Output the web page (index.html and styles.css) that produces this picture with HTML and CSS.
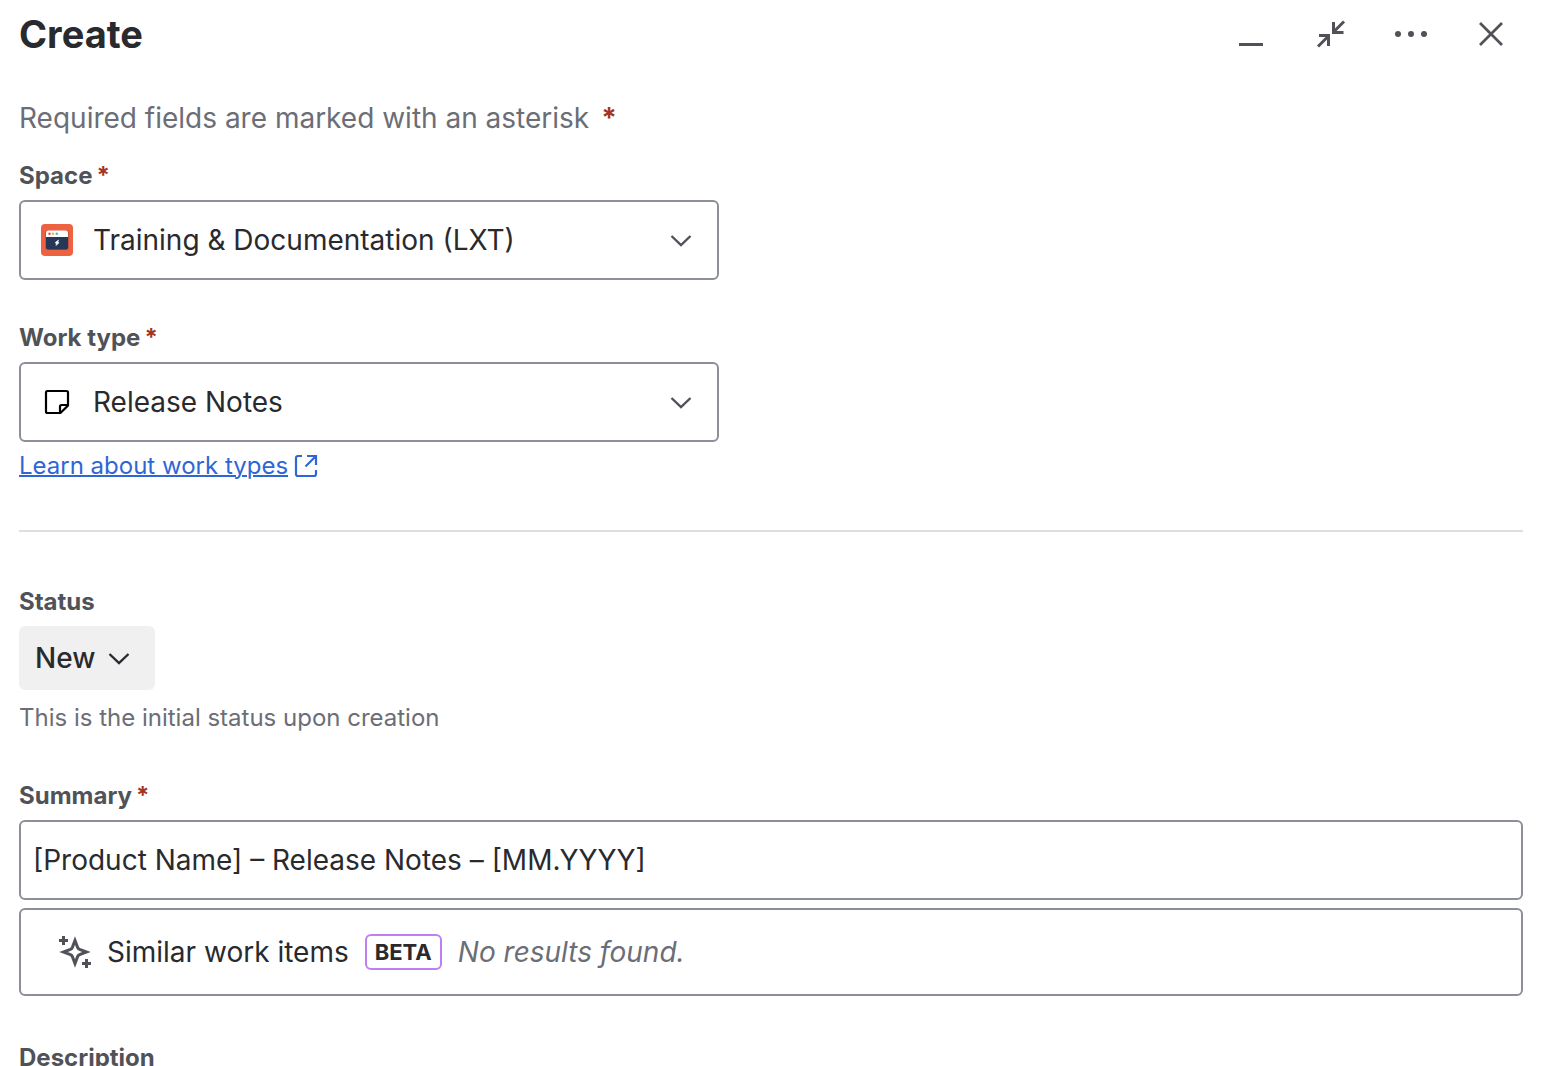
FILE: index.html
```html
<!DOCTYPE html>
<html lang="en">

<head>
    <meta charset="UTF-8">
    <meta name="viewport" content="width=device-width, initial-scale=1.0">
    <title>Create</title>
    <link rel="stylesheet" href="styles.css">
</head>

<body>
    <main class="dialog">
        <header class="header">
            <h1 class="title">Create</h1>
            <div class="actions">
                <button class="icon-button" type="button" aria-label="Minimize">
                    <svg width="32" height="32" viewBox="0 0 32 32"><path d="M4 26.500h24" stroke-width="3"/></svg>
                </button>
                <button class="icon-button" type="button" aria-label="Exit full screen">
                    <svg width="32" height="32" viewBox="0 0 32 32"><path d="M29 3.500L18.500 14M18.500 4V14.500H28.500M3 28.500L13.500 18M13.500 28V17.500H4" stroke-width="3"/></svg>
                </button>
                <button class="icon-button" type="button" aria-label="More actions">
                    <svg class="filled" width="36" height="32" viewBox="0 0 36 32"><circle cx="5" cy="16" r="3"/><circle cx="18" cy="16" r="3"/><circle cx="31" cy="16" r="3"/></svg>
                </button>
                <button class="icon-button" type="button" aria-label="Close">
                    <svg width="32" height="32" viewBox="0 0 32 32"><path d="M5 5L27 27M27 5L5 27" stroke-width="2.700"/></svg>
                </button>
            </div>
        </header>

        <form class="form">
            <p class="hint">Required fields are marked with an asterisk <span class="star">*</span></p>

            <div class="field field--first">
                <label class="label" for="space">Space<span class="star">*</span></label>
                <div class="select">
                    <select id="space">
                        <option>Training &amp; Documentation (LXT)</option>
                    </select>
                    <svg class="select__icon" width="32" height="32" viewBox="0 0 32 32">
                        <rect width="32" height="32" rx="4" fill="#ed6240"/>
                        <rect x="4" y="6.500" width="24" height="19.500" rx="3" fill="#c9503c"/>
                        <path d="M5 12.500h22v10.500a2.500 2.500 0 0 1-2.500 2.500H7.500a2.500 2.500 0 0 1-2.500-2.500z" fill="#253858"/>
                        <path d="M5 13V9a2.500 2.500 0 0 1 2.500-2.500h17a2.500 2.500 0 0 1 2.500 2.500v4z" fill="#fff"/>
                        <circle cx="8.500" cy="9.800" r="1.300" fill="#f0564a"/>
                        <circle cx="12" cy="9.800" r="1.300" fill="#f5b03d"/>
                        <circle cx="15.800" cy="9.800" r="1.300" fill="#4fb8dc"/>
                        <path d="M17.500 16L14 18.800l1.500 .5-.6 2.200 3.200-2.800-1.300-.5z" fill="#fff" stroke="#fff" stroke-width="0.600"/>
                    </svg>
                    <svg class="select__arrow" width="24" height="24" viewBox="0 0 24 24"><path d="M2.500 8l9.500 9 9.500-9"/></svg>
                </div>
            </div>

            <div class="field field--type">
                <label class="label" for="work-type">Work type<span class="star">*</span></label>
                <div class="select">
                    <select id="work-type">
                        <option>Release Notes</option>
                    </select>
                    <svg class="select__icon select__icon--note" width="32" height="32" viewBox="0 0 32 32"><path d="M6.500 5H25.500a1.500 1.500 0 0 1 1.500 1.500V19.500L19.500 27H6.500a1.500 1.500 0 0 1-1.500-1.500V6.500a1.500 1.500 0 0 1 1.500-1.500zM27 19H20.500a1.500 1.500 0 0 0-1.500 1.500V27"/></svg>
                    <svg class="select__arrow" width="24" height="24" viewBox="0 0 24 24"><path d="M2.500 8l9.500 9 9.500-9"/></svg>
                </div>
                <a class="link" href="#">
                    <span>Learn about work types</span>
                    <svg width="24" height="24" viewBox="0 0 24 24"><path d="M8 2H4a2 2 0 0 0-2 2v16a2 2 0 0 0 2 2h16a2 2 0 0 0 2-2v-4M13 2h9v9M22 2L11.500 12.500"/></svg>
                </a>
            </div>

            <hr class="divider">

            <div class="field field--status">
                <label class="label" for="status">Status</label>
                <button class="status" id="status" type="button">
                    New
                    <svg width="24" height="24" viewBox="0 0 24 24"><path d="M2.500 8l9.500 9 9.500-9"/></svg>
                </button>
                <p class="help">This is the initial status upon creation</p>
            </div>

            <div class="field">
                <label class="label" for="summary">Summary<span class="star">*</span></label>
                <input class="input" id="summary" type="text" value="[Product Name] – Release Notes – [MM.YYYY]">
                <div class="similar">
                    <svg class="sparkle" width="32" height="32" viewBox="0 0 32 32">
                        <path d="M16 4.500L18.600 11.400Q19.200 12.800 20.600 13.400L27.500 16L20.600 18.600Q19.200 19.200 18.600 20.600L16 27.500L13.400 20.600Q12.800 19.200 11.400 18.600L4.500 16L11.400 13.400Q12.800 12.800 13.400 11.400z"/>
                        <path d="M4.500 0v9M0 4.500h9M27.500 23v9M23 27.500h9"/>
                    </svg>
                    <span>Similar work items</span>
                    <span class="badge">BETA</span>
                    <em class="no-results">No results found.</em>
                </div>
            </div>

            <div class="field">
                <span class="label">Description</span>
            </div>
        </form>
    </main>
</body>

</html>
```

FILE: styles.css
```css
* {
    box-sizing: border-box;
    margin: 0;
    padding: 0;
}

body {
    background: #fff;
    color: #292a2e;
    font-family: Inter, "Liberation Sans", sans-serif;
    font-size: 28px;
    line-height: 40px;
}

button,
input,
select {
    font: inherit;
    color: inherit;
}

svg {
    flex: none;
    fill: none;
    stroke: currentColor;
    stroke-width: 3;
}

.dialog {
    padding: 2px 41px 0 19px;
}

.header {
    display: flex;
    align-items: center;
    justify-content: space-between;
}

.title {
    font-size: 38px;
    font-weight: 650;
    line-height: 48px;
}

.actions {
    display: flex;
    gap: 16px;
}

.icon-button {
    width: 64px;
    height: 64px;
    display: flex;
    align-items: center;
    justify-content: center;
    background: none;
    border: none;
    color: #505258;
}

.filled {
    fill: currentColor;
    stroke: none;
}

.hint {
    margin-top: 32px;
    color: #6b6e76;
}

.star {
    margin-left: 4px;
    color: #a33524;
    font-weight: 650;
}

.field {
    display: flex;
    flex-direction: column;
    align-items: flex-start;
    margin-top: 46px;
}

.field--first {
    margin-top: 22px;
}

.field--type {
    margin-top: 42px;
}

.field--status {
    margin-top: 54px;
}

.label {
    margin-bottom: 8px;
    color: #505258;
    font-size: 24px;
    font-weight: 650;
    line-height: 32px;
}

.select {
    width: 100%;
    max-width: 700px;
    display: grid;
    align-items: center;
}

.select > * {
    grid-area: 1 / 1;
}

.select select {
    width: 100%;
    height: 80px;
    padding: 0 72px;
    appearance: none;
    background: #fff;
    border: 2px solid #8c8f97;
    border-radius: 6px;
}

.select__icon {
    margin-left: 22px;
    stroke: none;
    pointer-events: none;
}

.select__icon--note {
    color: #000;
    stroke: currentColor;
    stroke-width: 2.2;
}

.select__arrow {
    justify-self: end;
    margin-right: 26px;
    color: #505258;
    stroke-width: 2.4;
    pointer-events: none;
}

.link {
    display: flex;
    align-items: center;
    gap: 6px;
    margin-top: 8px;
    color: #2f66d6;
    font-size: 24px;
    line-height: 32px;
    text-decoration: none;
}

.link span {
    text-decoration: underline;
    text-decoration-thickness: 2px;
}

.link svg {
    stroke-width: 2.2;
}

.divider {
    height: 2px;
    margin-top: 48px;
    background: #dddee1;
    border: none;
}

.status {
    height: 64px;
    display: flex;
    align-items: center;
    gap: 12px;
    padding: 0 24px 0 16px;
    background: #f0f0f1;
    border: none;
    border-radius: 6px;
    font-weight: 500;
}

.status svg {
    stroke-width: 2.4;
}

.help {
    margin-top: 12px;
    color: #6b6e76;
    font-size: 24px;
    line-height: 32px;
}

.input {
    width: 100%;
    height: 80px;
    padding: 0 12px;
    border: 2px solid #8c8f97;
    border-radius: 6px;
}

.similar {
    width: 100%;
    min-height: 88px;
    display: flex;
    align-items: center;
    gap: 16px;
    margin-top: 8px;
    padding: 0 38px;
    border: 2px solid #8c8f97;
    border-radius: 6px;
}

.sparkle {
    color: #505258;
}

.badge {
    padding: 0 8px;
    border: 2px solid #bf7ff0;
    border-radius: 6px;
    font-size: 22px;
    font-weight: 700;
    line-height: 32px;
}

.no-results {
    color: #6b6e76;
}
```
